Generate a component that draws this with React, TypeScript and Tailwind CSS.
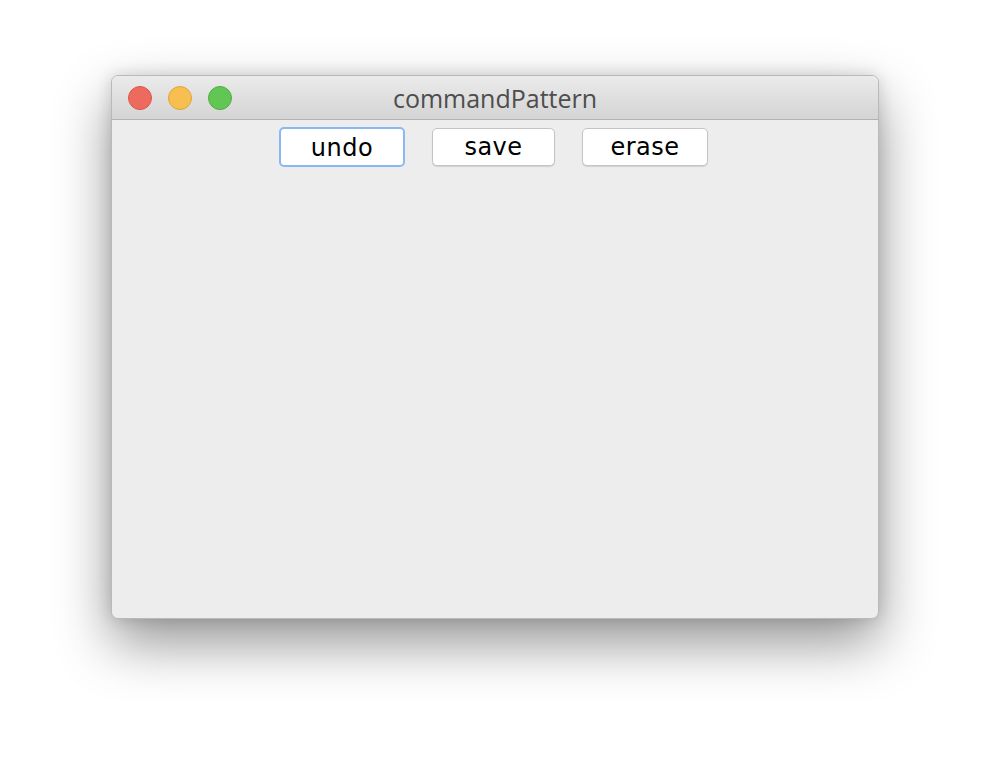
import React from "react";

function Light({ color, border }: { color: string; border: string }) {
  return <span className={`h-[24px] w-[24px] rounded-full border ${color} ${border}`} />;
}

function Button({ label, width, focused }: { label: string; width: string; focused?: boolean }) {
  return (
    <button
      className={
        focused
          ? `flex h-[40px] ${width} items-center justify-center rounded-[5px] border-2 border-[#8ab8f4] bg-white pt-[1px] text-[24px] leading-none tracking-[0.5px] text-black`
          : `flex h-[38px] ${width} items-center justify-center rounded-[5px] border border-[#c4c4c4] bg-white text-[24px] leading-none tracking-[0.5px] text-black shadow-[0_1px_1px_rgba(0,0,0,0.12)]`
      }
    >
      {label}
    </button>
  );
}

export default function App() {
  return (
    <div className="flex h-[766px] w-[990px] bg-white pl-[111px] pt-[75px] font-['DejaVu_Sans',sans-serif]">
      <div className="flex h-[544px] w-[768px] flex-col overflow-hidden rounded-[7px] border border-[#b9b9b9] bg-[#ededed] shadow-[0_24px_55px_rgba(0,0,0,0.42),0_0_16px_rgba(0,0,0,0.14)]">
        <div className="relative flex h-[44px] shrink-0 items-center border-b border-[#b2b2b2] bg-gradient-to-b from-[#ebebeb] to-[#d4d4d4]">
          <div className="flex items-center gap-[16px] pl-[16px]">
            <Light color="bg-[#ee6a5f]" border="border-[#d9574d]" />
            <Light color="bg-[#f6bf4f]" border="border-[#dea53b]" />
            <Light color="bg-[#62c655]" border="border-[#4eae41]" />
          </div>
          <span className="absolute inset-x-0 pt-[1px] text-center font-['Open_Sans',sans-serif] text-[25px] leading-none text-[#4d4d4d]">
            commandPattern
          </span>
        </div>
        <div className="flex justify-center gap-[27px] pr-[3px] pt-[7px]">
          <Button label="undo" width="w-[126px]" focused />
          <div className="pt-[1px]">
            <Button label="save" width="w-[123px]" />
          </div>
          <div className="pt-[1px]">
            <Button label="erase" width="w-[126px]" />
          </div>
        </div>
      </div>
    </div>
  );
}
